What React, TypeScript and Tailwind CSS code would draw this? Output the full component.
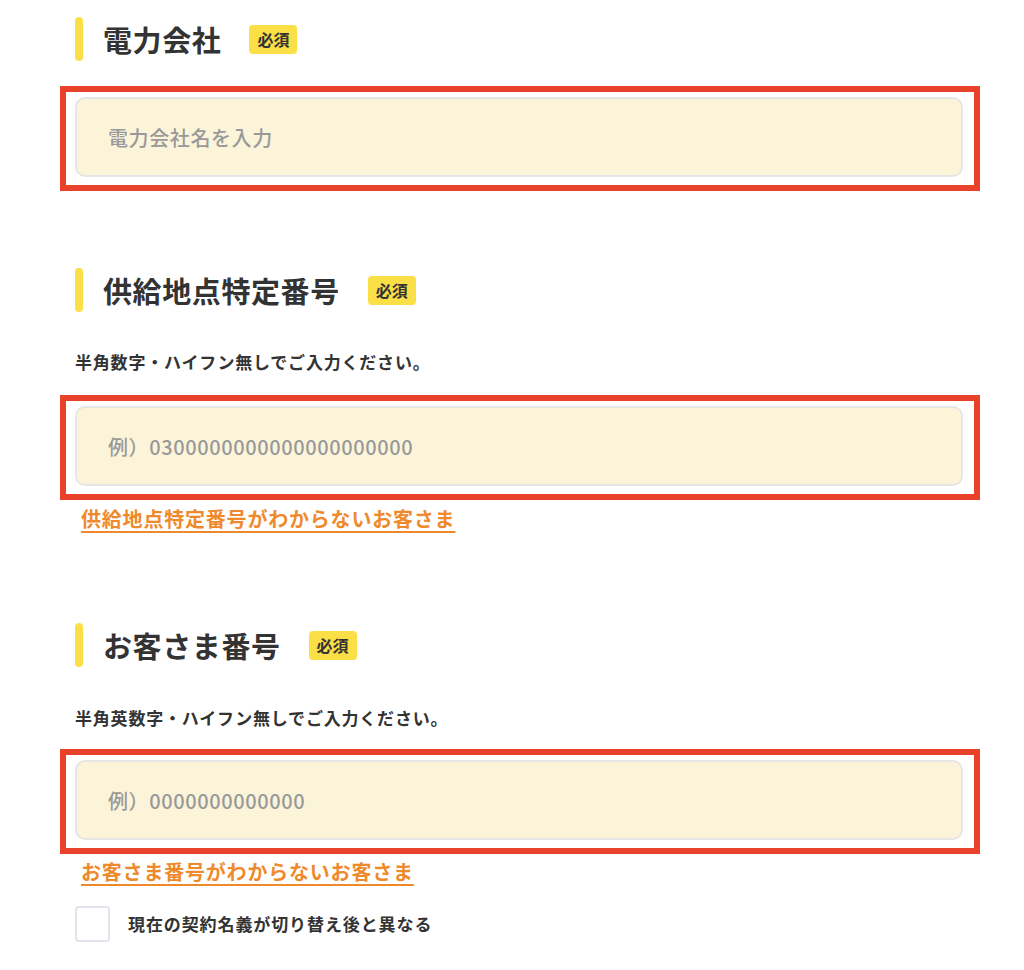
const SectionTitle = ({ title }: { title: string }) => (
  <div className="flex items-center h-[44px]">
    <span className="w-[8px] h-[44px] rounded-full bg-[#fbdf47]" />
    <h2 className="ml-[20px] text-[29px] font-bold leading-none tracking-[0.6px] text-[#333333]">{title}</h2>
    <span className="ml-[28px] flex items-center justify-center w-[48px] h-[29px] rounded-[4px] bg-[#fbdf47] text-[16px] font-bold text-[#333333]">
      必須
    </span>
  </div>
);

const FieldBox = ({ placeholder }: { placeholder: string }) => (
  // red annotation frame around the input
  <div className="-ml-[15px] w-[920px] border-[6px] border-[#e8432a] pl-[9px] pr-[11px] pt-[5px] pb-[8px]">
    <input
      type="text"
      placeholder={placeholder}
      className="block w-[888px] h-[80px] rounded-[10px] border-2 border-[#e6e6e6] bg-[#fbf4d9] pl-[31px] text-[20px] font-medium tracking-[0.6px] text-[#333333] placeholder:text-[#999999] outline-none"
    />
  </div>
);

const Note = ({ text }: { text: string }) => (
  <p className="text-[17px] leading-[24px] font-bold tracking-[0.8px] text-[#333333]">{text}</p>
);

const HelpLink = ({ text }: { text: string }) => (
  <a
    href="#"
    className="ml-[6px] block w-fit text-[20px] leading-[28px] font-bold tracking-[0.8px] text-[#ef8a2c] underline underline-offset-[4px]"
  >
    {text}
  </a>
);

const App = () => {
  return (
    <div
      className="min-h-[970px] w-[1024px] bg-white pl-[75px]"
      style={{ fontFamily: '"Noto Sans CJK JP", "Noto Sans", sans-serif' }}
    >
      <div className="pt-[17px]">
        <SectionTitle title="電力会社" />
        <div className="mt-[25px]">
          <FieldBox placeholder="電力会社名を入力" />
        </div>
      </div>

      <div className="mt-[77px]">
        <SectionTitle title="供給地点特定番号" />
        <div className="mt-[38px]">
          <Note text="半角数字・ハイフン無しでご入力ください。" />
        </div>
        <div className="mt-[21px]">
          <FieldBox placeholder="例）0300000000000000000000" />
        </div>
        <div className="mt-[5px]">
          <HelpLink text="供給地点特定番号がわからないお客さま" />
        </div>
      </div>

      <div className="mt-[90px]">
        <SectionTitle title="お客さま番号" />
        <div className="mt-[39px]">
          <Note text="半角英数字・ハイフン無しでご入力ください。" />
        </div>
        <div className="mt-[19px]">
          <FieldBox placeholder="例）0000000000000" />
        </div>
        <div className="mt-[4px]">
          <HelpLink text="お客さま番号がわからないお客さま" />
        </div>
      </div>

      <label className="mt-[20px] flex items-center gap-[18px]">
        <span className="w-[35px] h-[36px] rounded-[4px] border-2 border-[#e1e4ec] bg-white" />
        <span className="text-[17px] font-bold tracking-[0.9px] text-[#333333]">現在の契約名義が切り替え後と異なる</span>
      </label>
    </div>
  );
};

export default App;
